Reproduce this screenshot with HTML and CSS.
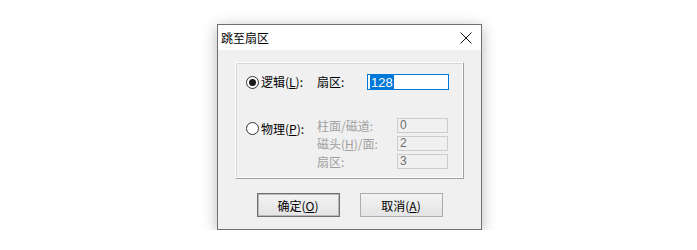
FILE: index.html
```html
<!DOCTYPE html>
<html lang="zh-CN">
<head>
  <meta charset="UTF-8">
  <title>跳至扇区</title>
  <link rel="stylesheet" href="styles.css">
</head>
<body>
<div class="desk">
  <div class="dialog">
    <div class="titlebar">
      <span class="title">跳至扇区</span>
      <svg class="close" width="12" height="12" viewBox="0 0 12 12">
        <path d="M0.5 0.5 L11.5 11.5 M11.5 0.5 L0.5 11.5" stroke="#111" stroke-width="1" fill="none"/>
      </svg>
    </div>
    <div class="content">
      <div class="group">
        <span class="radio on r1"></span>
        <span class="opt r1">逻辑(<u>L</u>):</span>
        <span class="lbl r1">扇区:</span>
        <span class="field active r1"><span class="sel">128</span></span>

        <span class="radio r3"></span>
        <span class="opt r3">物理(<u>P</u>):</span>
        <span class="lbl dim r3 wide">柱面/磁道:</span>
        <span class="field off r3">0</span>

        <span class="lbl dim r4 wide">磁头(<u>H</u>)/面:</span>
        <span class="field off r4">2</span>

        <span class="lbl dim r5 wide">扇区:</span>
        <span class="field off r5">3</span>
      </div>
      <div class="buttons">
        <button class="btn default">确定(<u>O</u>)</button>
        <button class="btn">取消(<u>A</u>)</button>
      </div>
    </div>
  </div>
</div>
</body>
</html>
```

FILE: styles.css
```css
body {
  margin: 0;
  background: #ffffff;
  font-family: "Noto Sans CJK SC", "Noto Sans", sans-serif;
  font-size: 12px;
  color: #000;
}

.desk {
  padding: 24px 0 0 217px;
}

.dialog {
  box-sizing: border-box;
  width: 265px;
  height: 206px;
  border: 1px solid #707070;
  background: #f0f0f0;
  box-shadow: 0 3px 14px rgba(0, 0, 0, 0.28);
  display: flex;
  flex-direction: column;
}

.titlebar {
  height: 25px;
  background: #ffffff;
  display: flex;
  align-items: center;
  justify-content: space-between;
  padding: 0 9px 0 3px;
}

.title {
  font-size: 12px;
  line-height: 14px;
}

.close {
  display: block;
}

.content {
  padding: 12px 17px 0 17px;
}

.group {
  box-sizing: border-box;
  width: 229px;
  height: 117px;
  border: 1px solid;
  border-color: #ffffff #a0a0a0 #a0a0a0 #ffffff;
  box-shadow: inset -1px -1px 0 #ffffff, inset 1px 1px 0 #d6d6d6;
  padding: 11px 0 0 10px;
  display: grid;
  grid-template-columns: 15px 56px 50px 30px 51px;
  grid-template-rows: 16px 22px 15px 15px 15px;
  row-gap: 3px;
  align-items: center;
}

.r1 { grid-row: 1; }
.r3 { grid-row: 3; }
.r4 { grid-row: 4; }
.r5 { grid-row: 5; }

.radio {
  grid-column: 1;
  box-sizing: border-box;
  width: 13px;
  height: 13px;
  border: 1px solid #333;
  border-radius: 50%;
  background: #fff;
  position: relative;
}

.radio.r3 {
  margin-top: 6px;
}

.radio.on::after {
  content: "";
  position: absolute;
  left: 2px;
  top: 2px;
  width: 7px;
  height: 7px;
  border-radius: 50%;
  background: #1a1a1a;
}

.opt {
  grid-column: 2;
  line-height: 14px;
}

.opt.r3 {
  margin-top: 6px;
}

.lbl {
  grid-column: 3;
  line-height: 14px;
}

.lbl.wide {
  grid-column: 3 / 5;
}

.dim {
  color: #a0a0a0;
}

.field {
  box-sizing: border-box;
  font-family: "Liberation Sans", Arial, sans-serif;
  font-size: 12px;
  line-height: 13px;
  padding-left: 2px;
}

.field.active {
  grid-column: 4 / 6;
  height: 16px;
  width: 82px;
  border: 1px solid #0078d7;
  background: #fff;
  padding-top: 1px;
  font-size: 13px;
}

.sel {
  background: #0078d7;
  color: #fff;
  padding: 0 1px;
}

.field.off {
  grid-column: 5;
  height: 15px;
  width: 51px;
  border: 1px solid #cccccc;
  background: #f0f0f0;
  color: #6d6d6d;
}

.buttons {
  display: flex;
  justify-content: center;
  gap: 20px;
  margin-top: 14px;
}

.btn {
  box-sizing: border-box;
  width: 83px;
  height: 24px;
  border: 1px solid #adadad;
  background: linear-gradient(#f3f3f3, #e4e4e4);
  font-family: "Noto Sans CJK SC", "Noto Sans", sans-serif;
  font-size: 12px;
  color: #000;
  padding: 0;
}

.btn.default {
  border-color: #6f6f6f;
  box-shadow: inset 0 0 0 1px #b9b9b9;
}
```
